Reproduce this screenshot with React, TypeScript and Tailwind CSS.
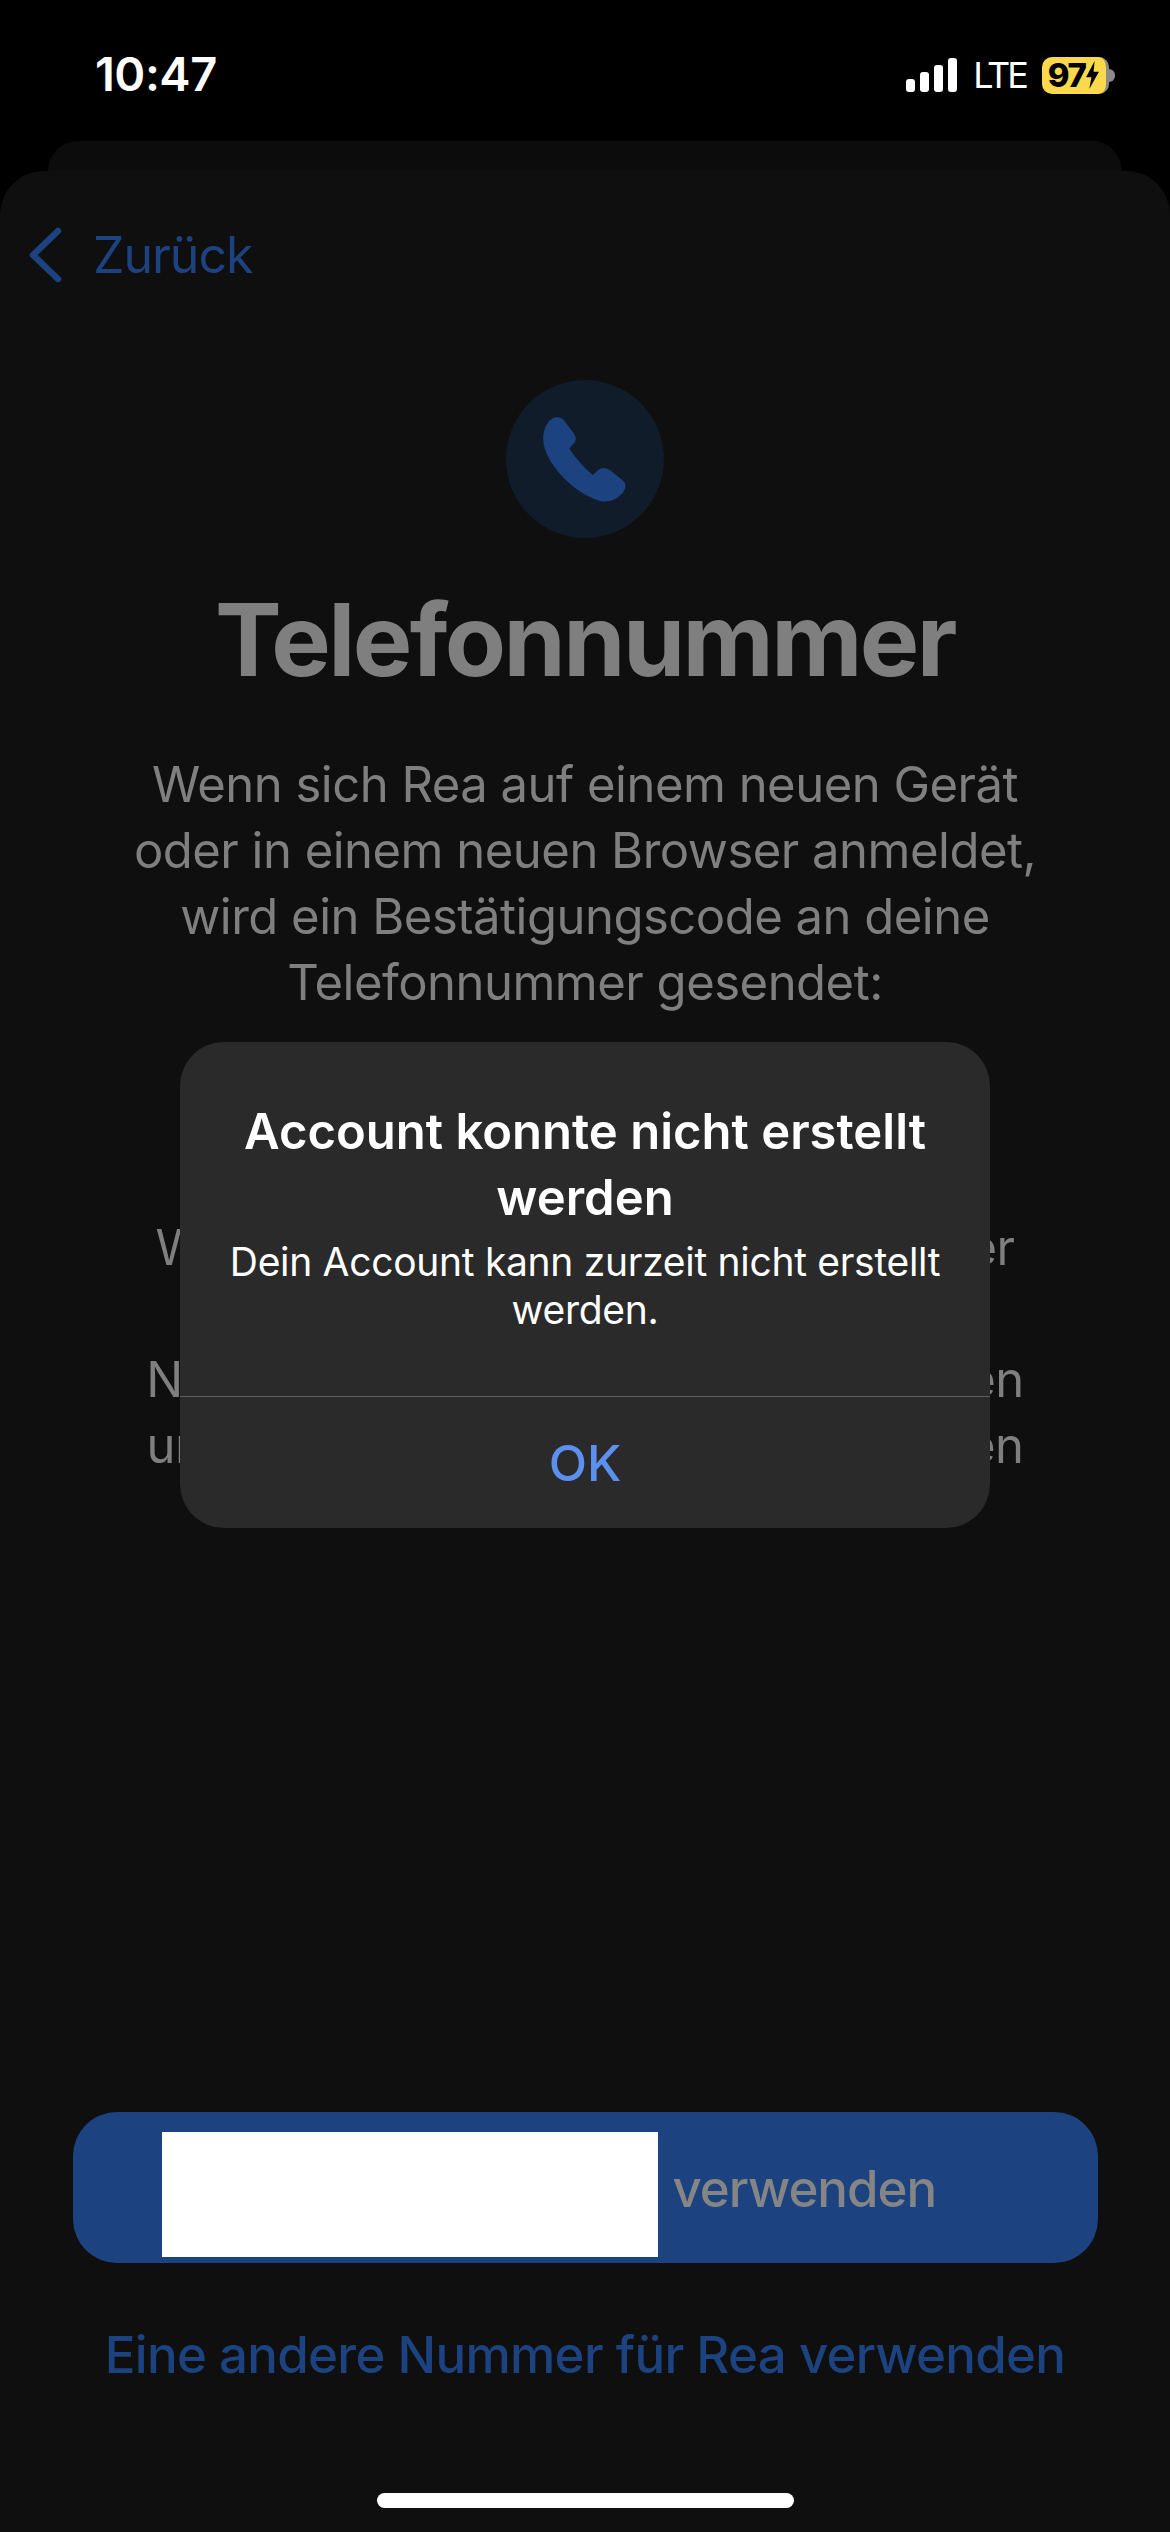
const FONT = "font-['Inter','Noto_Sans',sans-serif]"

function PhoneGlyph() {
  return (
    <svg viewBox="300 218 270 276" className="w-[90px] h-[92px]" fill="#1c4280">
      <path d="M330 240Q352 220 372 240L402 280Q414 298 400 310L388 325Q420 372 458 404L474 390Q490 376 510 390L548 420Q566 436 548 458Q520 490 480 482Q410 460 355 395Q305 335 310 285Q314 255 330 240Z" />
    </svg>
  )
}

function StatusBar() {
  return (
    <div className="h-[141px] shrink-0 flex items-start justify-between pt-[51px] pl-[95px] pr-[55px]">
      <span className="text-[47px] leading-[46px] font-semibold text-white tracking-[-0.5px]">10:47</span>
      <div className="flex items-center h-[46px] mt-[1px]">
        <div className="flex items-end gap-[5px] h-[34px]">
          <div className="w-[9px] h-[13px] rounded-[3px] bg-white" />
          <div className="w-[9px] h-[20px] rounded-[3px] bg-white" />
          <div className="w-[9px] h-[27px] rounded-[3px] bg-white" />
          <div className="w-[9px] h-[34px] rounded-[3px] bg-white" />
        </div>
        <span className="ml-[16px] text-[36px] leading-[46px] font-normal text-white tracking-[-3px]">LTE</span>
        <div className="ml-[16px] flex items-center">
          <div className="w-[67px] h-[37px] rounded-[10px] bg-[#fbd84c] border-r-[3px] border-[#8a8a8a] flex items-center justify-center">
            <span className="text-[33px] leading-[37px] font-extrabold text-black tracking-[-1.5px]">97</span>
            <svg viewBox="0 0 14 26" className="w-[15px] h-[28px]" fill="#000">
              <path d="M9 0L1 15H6L4 26L13 10H8Z" />
            </svg>
          </div>
          <div className="w-[6px] h-[13px] rounded-r-full bg-[#8a8a8a]" />
        </div>
      </div>
    </div>
  )
}

function BackLink() {
  return (
    <div className="flex items-center h-[56px] pl-[28px] mt-[56px]">
      <svg viewBox="0 0 34 56" className="w-[34px] h-[56px]" fill="none" stroke="#1c4280" strokeWidth="6.5" strokeLinecap="round" strokeLinejoin="round">
        <path d="M30 4L5 28L30 52" />
      </svg>
      <span className="ml-[31px] text-[50px] leading-[56px] tracking-[-1px] text-[#1c4280]">Zurück</span>
    </div>
  )
}

function AlertDialog() {
  return (
    <div className="absolute left-[180px] top-[1042px] w-[810px] h-[486px] rounded-[44px] bg-[#2a2a2a] flex flex-col">
      <div className="h-[354px] pt-[57px] px-[30px] text-center text-white">
        <p className="text-[49px] leading-[66px] font-semibold">Account konnte nicht erstellt werden</p>
        <p className="mt-[7px] text-[39px] leading-[48px] tracking-[-0.3px]">
          Dein Account kann zurzeit nicht erstellt
          <br />
          werden.
        </p>
      </div>
      <div className="h-px bg-[#5f5f5f]" />
      <div className="flex-1 flex items-center justify-center pt-[2px] text-[50px] font-medium text-[#5c8fee]">OK</div>
    </div>
  )
}

export default function App() {
  return (
    <div className={`relative w-[1170px] h-[2532px] bg-black overflow-hidden flex flex-col ${FONT}`}>
      <StatusBar />
      <div className="h-[30px] shrink-0 mx-[48px] rounded-t-[36px] bg-[#0c0c0c]" />
      <div className="flex-1 rounded-t-[44px] bg-[#0f0f0f] flex flex-col items-center">
        <div className="self-stretch">
          <BackLink />
        </div>
        <div className="mt-[97px] w-[158px] h-[158px] rounded-full bg-[#111c2a] flex items-center justify-center">
          <PhoneGlyph />
        </div>
        <h1 className="mt-[42px] text-[100px] leading-[120px] font-bold text-[#7f7f7f] tracking-[-2.6px]">Telefonnummer</h1>
        <div className="mt-[52px] w-[1000px] text-center text-[49px] leading-[66px] tracking-[-0.5px] text-[#7f7f7f] whitespace-nowrap">
          <p>
            Wenn sich Rea auf einem neuen Gerät
            <br />
            oder in einem neuen Browser anmeldet,
            <br />
            wird ein Bestätigungscode an deine
            <br />
            Telefonnummer gesendet:
          </p>
          <p className="mt-[199px]">Wir geben deine Nummer nicht weiter</p>
          <p className="mt-[66px]">
            Nachrichten- und Datenkosten können
            <br />
            unter Umständen je nach Tarif anfallen
          </p>
          <p className="mt-[-7px]">bei deinem Anbieter</p>
        </div>
        <div className="mt-auto w-[1025px] h-[151px] rounded-[44px] bg-[#1c4280] flex items-center pl-[89px]">
          <div className="self-start mt-[20px] w-[496px] h-[125px] bg-white" />
          <span className="ml-[15px] mt-[3px] text-[51px] font-medium tracking-[-1px] text-[#858585]">verwenden</span>
        </div>
        <div className="mt-[62px] text-[51px] leading-[60px] font-medium tracking-[-0.7px] text-[#1c4280]">Eine andere Nummer für Rea verwenden</div>
        <div className="mt-[108px] mb-[24px] w-[417px] h-[15px] rounded-full bg-white" />
      </div>
      <AlertDialog />
    </div>
  )
}
